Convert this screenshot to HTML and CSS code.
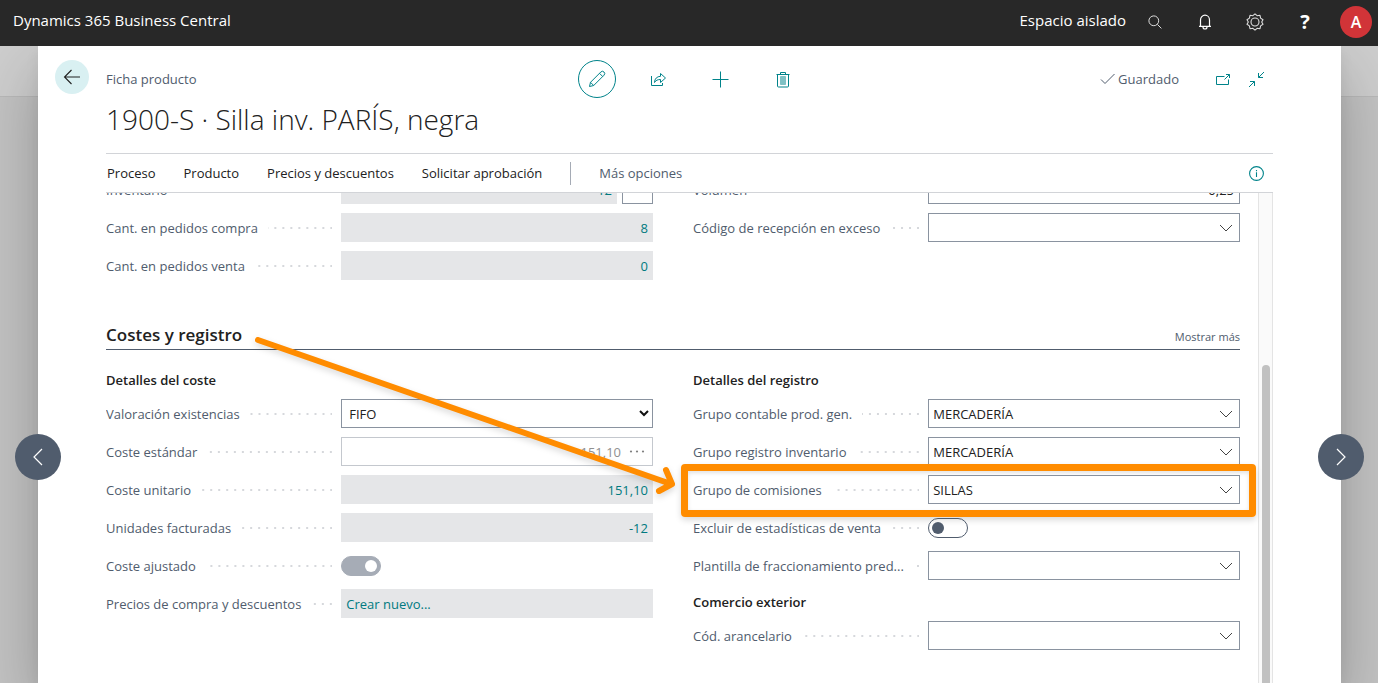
FILE: index.html
```html
<!DOCTYPE html>
<html lang="es">
<head>
<meta charset="utf-8">
<title>Ficha producto - Dynamics 365 Business Central</title>
<meta name="viewport" content="width=device-width, initial-scale=1">
<link rel="stylesheet" href="styles.css">
</head>
<body>
<svg class="sprite" aria-hidden="true">
  <symbol id="chev" viewBox="0 0 14 8"><path d="M1 1l6 6 6-6" fill="none" stroke="currentColor"/></symbol>
</svg>
<header class="topbar">
  <a class="brand" href="#">Dynamics 365 Business Central</a>
  <span class="env">Espacio aislado</span>
  <button class="top-btn" aria-label="Buscar"><svg width="14" height="14" viewBox="0 0 14 14" fill="none" stroke="#ddd"><circle cx="5.8" cy="5.8" r="4.9"/><path d="M9.4 9.4l4 4"/></svg></button>
  <button class="top-btn" aria-label="Notificaciones"><svg width="14" height="16" viewBox="0 0 14 16" fill="none" stroke="#fff" stroke-width="1.2"><path d="M2.500 12.400V6a4.500 4.800 0 0 1 9 0v6.400M1 12.400h12M5 13a2 2 0 0 0 4 0"/></svg></button>
  <button class="top-btn" aria-label="Configuración"><svg width="18" height="18" viewBox="0 0 18 18" fill="none" stroke="#ddd" stroke-width="1.1"><circle cx="9" cy="9" r="4"/><path d="M9 .9l2.100 1.800 2.900-.4.6 2.800 2.400 1.700L15.700 9l1.300 2.300-2.400 1.600-.6 2.800-2.900-.4L9 17.100l-2.100-1.800-2.900.4-.6-2.800L1 11.300 2.300 9 1 6.800l2.400-1.700.6-2.800 2.900.4z" stroke-linejoin="round"/></svg></button>
  <button class="top-btn help" aria-label="Ayuda">?</button>
  <button class="avatar" aria-label="Cuenta">A</button>
</header>
<main class="stage">
  <div class="dialog">
    <button class="nav prev" aria-label="Anterior"><svg width="10" height="18" viewBox="0 0 10 18" fill="none" stroke="#fff" stroke-width="1.2"><path d="M9 1L1 9l8 8"/></svg></button>
    <button class="nav next" aria-label="Siguiente"><svg width="10" height="18" viewBox="0 0 10 18" fill="none" stroke="#fff" stroke-width="1.2"><path d="M1 1l8 8-8 8"/></svg></button>
    <div class="gutter">
      <button class="back" aria-label="Atrás"><svg width="18" height="16" viewBox="0 0 18 16" fill="none" stroke="#212121" stroke-width="1.1"><path d="M17 8H1.500M8.500 1L1.500 8l7 7"/></svg></button>
    </div>
    <div class="content">
      <div class="head">
        <span class="caption">Ficha producto</span>
        <div class="actions">
          <button class="act edit" aria-label="Editar"><svg width="18" height="18" viewBox="0 0 18 18" fill="none" stroke="currentColor" stroke-linejoin="round"><path d="M1.500 16.500l1-4.200L12.800 2a2 2 0 0 1 3.200 3.200L5.700 15.500zM2.500 12.300l3.200 3.200M11.500 3.300l3.200 3.200"/></svg></button>
          <button class="act" aria-label="Compartir"><svg width="17" height="15" viewBox="0 0 17 15" fill="none" stroke="currentColor" stroke-linejoin="round"><path d="M1.500 4v9.500h11V11M4.500 10.500C4.700 6.500 7 4.500 10.500 4.300V1.500l5 4.500-5 4.500V7.500C7.500 7.500 6 8.300 4.500 10.500z"/></svg></button>
          <button class="act" aria-label="Nuevo"><svg width="17" height="17" viewBox="0 0 17 17" stroke="currentColor"><path d="M8.500 .5v16M.5 8.500h16"/></svg></button>
          <button class="act" aria-label="Eliminar"><svg width="14" height="17" viewBox="0 0 14 17" fill="none" stroke="currentColor"><path d="M.5 3.500h13M4.500 3.500v-2h5v2M1.500 3.500v11.500q0 1 1 1h9q1 0 1-1V3.500"/><path d="M4.500 5.500h5v8h-5z" fill="#7fc1c4" stroke="#7fc1c4"/></svg></button>
        </div>
        <div class="status">
          <svg width="16" height="12" viewBox="0 0 16 12" fill="none" stroke="#505c6d"><path d="M1 6.500l4 4L14.500 1"/></svg>
          <span class="saved">Guardado</span>
          <button class="mini" aria-label="Abrir en una ventana nueva"><svg width="16" height="13" viewBox="0 0 16 13" fill="none" stroke="currentColor"><path d="M9.500 3.500h-8v8h12v-5M9.500 6.500L14.500 1.500M11 1.500h3.500V5"/></svg></button>
          <button class="mini" aria-label="Contraer"><svg width="17" height="17" viewBox="0 0 17 17" fill="none" stroke="currentColor"><path d="M16 1l-5.500 5.500M10.500 2v4.500H15M1 16l5.500-5.500M2 10.500h4.500V15"/></svg></button>
        </div>
      </div>
      <h1 class="title">1900-S · Silla inv. PARÍS, negra</h1>
      <nav class="menu">
        <a href="#">Proceso</a><a href="#">Producto</a><a href="#">Precios y descuentos</a><a href="#">Solicitar aprobación</a>
        <span class="sep"></span>
        <a class="more" href="#">Más opciones</a>
        <button class="info" aria-label="Información"><svg width="15" height="15" viewBox="0 0 15 15" fill="none" stroke="currentColor" stroke-width="1.1"><circle cx="7.500" cy="7.500" r="6.900"/><path d="M7.500 6.300v4.700M7.500 4v1.300"/></svg></button>
      </nav>
      <div class="scroller">
        <div class="form">
          <section class="cols first">
            <div class="col">
              <div class="row"><label for="f1">Inventario</label><i></i><div class="field split"><input id="f1" class="ro" readonly value="12"><button class="box" aria-label="Más detalles"></button></div></div>
              <div class="row"><label for="f2">Cant. en pedidos compra</label><i></i><div class="field"><input id="f2" class="ro" readonly value="8"></div></div>
              <div class="row"><label for="f3">Cant. en pedidos venta</label><i></i><div class="field"><input id="f3" class="ro" readonly value="0"></div></div>
            </div>
            <div class="col">
              <div class="row"><label for="f4">Volumen</label><i></i><div class="field"><input id="f4" class="edit-box num" value="0,25"></div></div>
              <div class="row"><label for="f5">Código de recepción en exceso</label><i></i><div class="field edit-box"><input id="f5"><button class="drop" aria-label="Elegir"><svg width="14" height="8"><use href="#chev"/></svg></button></div></div>
            </div>
          </section>
          <section class="group">
            <header class="group-head"><h2>Costes y registro</h2><a href="#">Mostrar más</a></header>
            <div class="cols">
              <div class="col">
                <h3>Detalles del coste</h3>
                <div class="row"><label for="g1">Valoración existencias</label><i></i><div class="field edit-box pick"><select id="g1"><option>FIFO</option></select><svg width="10" height="7" viewBox="0 0 10 7" fill="none" stroke="#111" stroke-width="2"><path d="M1 1l4 4 4-4"/></svg></div></div>
                <div class="row"><label for="g2">Coste estándar</label><i></i><div class="field edit-box off"><input id="g2" class="num" disabled value="151,10"><button class="drop" disabled aria-label="Más"><svg width="16" height="3" viewBox="0 0 16 3" fill="#808080"><circle cx="2" cy="1.500" r="1.100"/><circle cx="8" cy="1.500" r="1.100"/><circle cx="14" cy="1.500" r="1.100"/></svg></button></div></div>
                <div class="row"><label for="g3">Coste unitario</label><i></i><div class="field"><input id="g3" class="ro" readonly value="151,10"></div></div>
                <div class="row"><label for="g4">Unidades facturadas</label><i></i><div class="field"><input id="g4" class="ro" readonly value="-12"></div></div>
                <div class="row"><label for="g5">Coste ajustado</label><i></i><div class="field"><input id="g5" class="switch" type="checkbox" checked disabled></div></div>
                <div class="row"><span class="name">Precios de compra y descuentos</span><i></i><div class="field"><a class="link" href="#">Crear nuevo...</a></div></div>
              </div>
              <div class="col">
                <h3>Detalles del registro</h3>
                <div class="row"><label for="h1">Grupo contable prod. gen.</label><i></i><div class="field edit-box"><input id="h1" value="MERCADERÍA"><button class="drop" aria-label="Elegir"><svg width="14" height="8"><use href="#chev"/></svg></button></div></div>
                <div class="row"><label for="h2">Grupo registro inventario</label><i></i><div class="field edit-box"><input id="h2" value="MERCADERÍA"><button class="drop" aria-label="Elegir"><svg width="14" height="8"><use href="#chev"/></svg></button></div></div>
                <div class="row marked"><label for="h3">Grupo de comisiones</label><i></i><div class="field edit-box"><input id="h3" value="SILLAS"><button class="drop" aria-label="Elegir"><svg width="14" height="8"><use href="#chev"/></svg></button></div></div>
                <div class="row"><label for="h4">Excluir de estadísticas de venta</label><i></i><div class="field"><input id="h4" class="switch" type="checkbox"></div></div>
                <div class="row"><label for="h5">Plantilla de fraccionamiento pred...</label><i></i><div class="field edit-box"><input id="h5"><button class="drop" aria-label="Elegir"><svg width="14" height="8"><use href="#chev"/></svg></button></div></div>
                <h3 class="sub">Comercio exterior</h3>
                <div class="row"><label for="h6">Cód. arancelario</label><i></i><div class="field edit-box"><input id="h6"><button class="drop" aria-label="Elegir"><svg width="14" height="8"><use href="#chev"/></svg></button></div></div>
              </div>
            </div>
            <svg class="arrow" width="430" height="170" viewBox="0 0 430 170" fill="none" stroke="#ff8c00" stroke-width="6" stroke-linecap="round" stroke-linejoin="round" aria-hidden="true"><path d="M8 9L421 153M416 139l6 14-13 7"/></svg>
          </section>
        </div>
        <div class="track"><div class="thumb"></div></div>
      </div>
    </div>
  </div>
</main>
</body>
</html>
```
FILE: styles.css
```css
* { box-sizing: border-box; }
body {
  margin: 0;
  height: 100vh;
  display: flex;
  flex-direction: column;
  overflow: hidden;
  font: 13px/20px "Open Sans", "Noto Sans", sans-serif;
  color: #212121;
}
button, input, select { font: inherit; color: inherit; margin: 0; padding: 0; border: 0; background: none; }
button { display: flex; align-items: center; justify-content: center; }
a { color: inherit; text-decoration: none; }
svg { display: block; flex: none; }
h1, h2, h3 { margin: 0; }
.sprite { position: absolute; width: 0; height: 0; }

.topbar {
  position: relative;
  z-index: 2;
  flex: none;
  height: 46px;
  padding: 0 6px 2px 13px;
  display: flex;
  align-items: center;
  background: #282828;
  color: #fff;
  font-size: 15px;
}
.brand { margin-right: auto; padding-bottom: 4px; font-weight: 500; }
.env { padding-bottom: 4px; margin-right: 4px; font-weight: 500; }
.top-btn { width: 50px; height: 40px; }
.help { font-size: 20px; font-weight: 700; }
.avatar {
  width: 32px;
  height: 32px;
  margin-left: 10px;
  border-radius: 50%;
  background: #d13438;
  font-size: 16px;
  font-weight: 600;
}

.stage {
  flex: 1;
  min-height: 0;
  padding: 0 37px 0 38px;
  background: linear-gradient(#cdcdcd 50px, #b8b8b8 50px, #b8b8b8 51px, #c2c2c2 51px);
}
.dialog {
  position: relative;
  height: 100%;
  display: flex;
  padding: 0 68px 0 17px;
  background: #fff;
  box-shadow: 0 26px 58px rgba(0, 0, 0, .24), 0 5px 14px rgba(0, 0, 0, .06);
}
.nav {
  position: absolute;
  top: 388px;
  width: 46px;
  height: 46px;
  border-radius: 50%;
  background: #505c6d;
}
.prev { left: -23px; }
.next { right: -23px; }
.gutter { flex: none; width: 51px; padding-top: 14px; }
.back { width: 34px; height: 34px; border-radius: 50%; background: #d9f0f2; }

.content { flex: 1; min-width: 0; display: flex; flex-direction: column; }
.head {
  flex: none;
  display: grid;
  grid-template-columns: 1fr auto 1fr;
  align-items: center;
  padding-top: 14px;
}
.caption, .saved { color: #505c6d; }
.actions { display: flex; gap: 24px; color: #00838a; }
.act { width: 38px; height: 38px; }
.edit { border: 1px solid #00838a; border-radius: 50%; }
.status { display: flex; align-items: center; justify-content: flex-end; padding-right: 8px; }
.saved { margin: 0 36px 0 2px; }
.mini { color: #00838a; }
.mini + .mini { margin-left: 17px; }
.title { flex: none; padding-bottom: 13px; font-size: 28px; line-height: 42px; font-weight: 300; }

.menu {
  flex: none;
  height: 40px;
  display: flex;
  align-items: center;
  gap: 28px;
  padding: 0 9px 0 1px;
  border-top: 1px solid #d2d4d8;
  border-bottom: 1px solid #d2d4d8;
}
.sep { width: 1px; height: 23px; background: #a5abb5; }
.more { color: #505c6d; }
.info { margin-left: auto; color: #00838a; }

.scroller { flex: 1; min-height: 0; display: flex; overflow: hidden; }
.form { flex: 1; min-width: 0; margin-top: -18px; }
.track {
  flex: none;
  width: 15px;
  margin-left: 18px;
  display: flex;
  flex-direction: column;
  justify-content: flex-end;
  align-items: center;
  border: solid #e4e4e4;
  border-width: 0 1px;
  background: #fafafa;
}
.thumb { width: 8px; height: 65%; border-radius: 4px 4px 0 0; background: #c1c1c1; }

.cols { display: grid; grid-template-columns: 1fr 1fr; gap: 40px; }
.col { min-width: 0; display: flex; flex-direction: column; gap: 9px; }
.row { position: relative; display: flex; align-items: center; height: 29px; color: #505c6d; }
.row label, .name { flex: none; white-space: nowrap; }
.row i {
  flex: 1;
  height: 2px;
  margin: 1px 9px 0 10px;
  background: linear-gradient(90deg, transparent 6px, #d6d8dc 6px) right / 8px 2px repeat-x;
}
.field { flex: none; width: 57%; height: 29px; display: flex; align-items: center; }
.field input, .field select { width: 100%; height: 100%; min-width: 0; }
.field input:not(.switch) { padding: 0 5px; color: #212121; outline: 0; }
.field.edit-box input { padding: 0 4px; }
.split { gap: 5px; }
.box { flex: none; width: 31px; height: 29px; border: 1px solid #8a93a0; }
.field input.ro { background: #e5e6e8; color: #007a80; text-align: right; }
.link { width: 100%; height: 100%; padding: 5px 5px 4px; background: #e5e6e8; color: #007a80; }
.edit-box, .field input.edit-box { border: 1px solid #8a93a0; background: #fff; }
.field input.num { text-align: right; }
.off { border-color: #c4c8ce; }
.field.off input { color: #909090; padding-right: 1px; }
.drop { flex: none; width: 26px; height: 27px; color: #444; }
.off .drop { width: 30px; }
.pick { display: grid; }
.pick select { grid-area: 1 / 1; appearance: none; padding: 0 7px; color: #212121; }
.pick svg { grid-area: 1 / 1; justify-self: end; margin-right: 3px; pointer-events: none; }
.field .switch {
  appearance: none;
  display: flex;
  align-items: center;
  width: 40px;
  height: 20px;
  padding: 0 3px;
  border: 1px solid #505c6d;
  border-radius: 10px;
}
.switch::before { content: ""; width: 12px; height: 12px; border-radius: 50%; background: #505c6d; }
.switch:checked { justify-content: flex-end; border-color: #a6acb6; background: #a6acb6; }
.switch:checked::before { background: #fff; }

.group { position: relative; margin-top: 40px; }
.group-head {
  display: flex;
  align-items: center;
  justify-content: space-between;
  height: 30px;
  margin-bottom: 20px;
  border-bottom: 1px solid #505c6d;
}
.group-head h2 { font-size: 17px; line-height: 24px; font-weight: 600; }
.group-head a { padding-top: 4px; font-size: 11px; color: #505c6d; }
h3 { font-size: 13px; line-height: 20px; font-weight: 600; }
.sub { padding-top: 3px; }

.marked::after {
  content: "";
  position: absolute;
  inset: -11px -16px -13px -12px;
  border: 7px solid #ff8c00;
  border-radius: 4px;
  box-shadow: 0 3px 6px rgba(0, 0, 0, .15), inset 0 2px 4px rgba(0, 0, 0, .12);
  pointer-events: none;
}
.arrow {
  position: absolute;
  top: 11px;
  left: 144px;
  pointer-events: none;
  filter: drop-shadow(0 3px 3px rgba(0, 0, 0, .15));
}
```
